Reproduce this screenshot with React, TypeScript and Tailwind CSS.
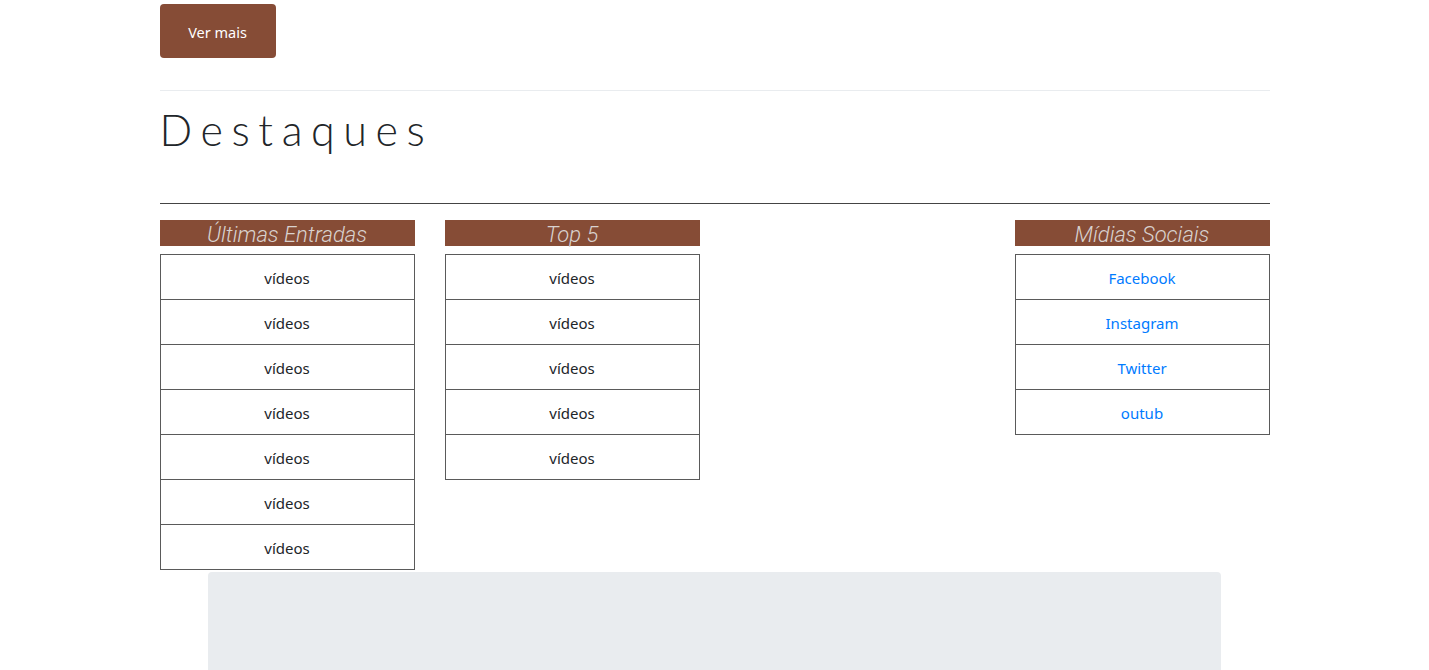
const latest = Array(7).fill("vídeos");
const top5 = Array(5).fill("vídeos");
const socials = ["Facebook", "Instagram", "Twitter", "outub"];

const Column = ({ title, items, link }: { title: string; items: string[]; link?: boolean }) => (
  <div>
    <h3 className="h-[26px] bg-[#864c36] pt-[2px] text-center text-[22px] leading-[26px] font-light italic text-[#d9d2cf] font-['Roboto',sans-serif]">
      {title}
    </h3>
    <ul className="mt-2 border-t border-[#5a5a5a]">
      {items.map((item, i) => (
        <li
          key={i}
          className="flex h-[45px] items-center justify-center border-x border-b border-[#5a5a5a] pt-[2px]"
        >
          {link ? (
            <a href="#" className="text-[#007bff]">
              {item}
            </a>
          ) : (
            <span className="text-[#212529]">{item}</span>
          )}
        </li>
      ))}
    </ul>
  </div>
);

export default function App() {
  return (
    <div className="h-[670px] overflow-hidden bg-white font-['Noto_Sans',sans-serif] text-[15px] text-[#212529]">
      <div className="mx-auto w-[1110px] pt-1">
        <button className="h-[54px] w-[116px] rounded bg-[#864c36] pt-[3px] text-[14.5px] text-white">Ver mais</button>

        <hr className="mt-8 border-t border-[#e9ecef]" />

        <h2 className="mt-[12px] h-[100px] font-['Lato',sans-serif] text-[43px] leading-[54px] font-light tracking-[0.2em] text-[#212529]">
          Destaques
        </h2>

        <hr className="border-t border-[#444]" />

        <div className="mt-4 grid grid-cols-4 gap-[30px]">
          <Column title="Últimas Entradas" items={latest} />
          <Column title="Top 5" items={top5} />
          <div />
          <Column title="Mídias Sociais" items={socials} link />
        </div>

        <div className="mx-auto mt-[2px] h-[120px] w-[1013px] rounded bg-[#e9ecef]" />
      </div>
    </div>
  );
}
